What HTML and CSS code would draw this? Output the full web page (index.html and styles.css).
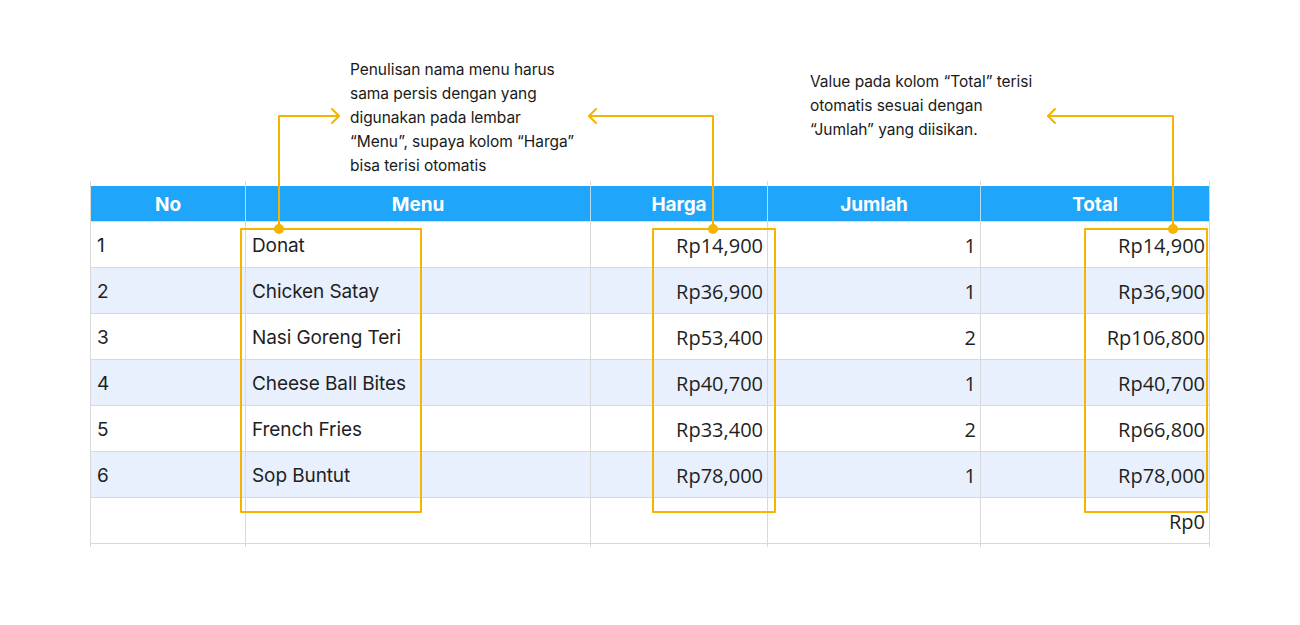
FILE: index.html
```html
<!DOCTYPE html>
<html lang="id">
<head>
<meta charset="utf-8">
<title>Pesanan</title>
<link rel="stylesheet" href="styles.css">
</head>
<body>
<div class="page">
  <p class="note note-menu">Penulisan nama menu harus<br>sama persis dengan yang<br>digunakan pada lembar<br>“Menu”, supaya kolom “Harga”<br>bisa terisi otomatis</p>
  <p class="note note-total">Value pada kolom “Total” terisi<br>otomatis sesuai dengan<br>“Jumlah” yang diisikan.</p>

  <div class="sheet">
    <div class="cell gap"></div><div class="cell gap"></div><div class="cell gap"></div><div class="cell gap"></div><div class="cell gap"></div>

    <div class="cell head">No</div><div class="cell head">Menu</div><div class="cell head">Harga</div><div class="cell head">Jumlah</div><div class="cell head">Total</div>

    <div class="cell txt">1</div><div class="cell txt">Donat</div><div class="cell num">Rp14,900</div><div class="cell num">1</div><div class="cell num">Rp14,900</div>
    <div class="cell txt alt">2</div><div class="cell txt alt">Chicken Satay</div><div class="cell num alt">Rp36,900</div><div class="cell num alt">1</div><div class="cell num alt">Rp36,900</div>
    <div class="cell txt">3</div><div class="cell txt">Nasi Goreng Teri</div><div class="cell num">Rp53,400</div><div class="cell num">2</div><div class="cell num">Rp106,800</div>
    <div class="cell txt alt">4</div><div class="cell txt alt">Cheese Ball Bites</div><div class="cell num alt">Rp40,700</div><div class="cell num alt">1</div><div class="cell num alt">Rp40,700</div>
    <div class="cell txt">5</div><div class="cell txt">French Fries</div><div class="cell num">Rp33,400</div><div class="cell num">2</div><div class="cell num">Rp66,800</div>
    <div class="cell txt alt">6</div><div class="cell txt alt">Sop Buntut</div><div class="cell num alt">Rp78,000</div><div class="cell num alt">1</div><div class="cell num alt">Rp78,000</div>
    <div class="cell txt"></div><div class="cell txt"></div><div class="cell num"></div><div class="cell num"></div><div class="cell num">Rp0</div>

    <div class="cell gap"></div><div class="cell gap"></div><div class="cell gap"></div><div class="cell gap"></div><div class="cell gap"></div>
  </div>

  <svg class="callouts" width="1300" height="625" viewBox="0 0 1300 625" aria-hidden="true">
    <g fill="none" stroke="#f5b400" stroke-width="2" stroke-linecap="round" stroke-linejoin="round">
      <rect x="241" y="229" width="180" height="283"/>
      <rect x="653" y="229" width="122" height="283"/>
      <rect x="1085" y="229" width="122" height="283"/>
      <path d="M279 229 V116 H339"/>
      <path d="M332 109 L339 116 L332 123"/>
      <path d="M713 229 V116 H589"/>
      <path d="M596 109 L589 116 L596 123"/>
      <path d="M1173 229 V116 H1048"/>
      <path d="M1055 109 L1048 116 L1055 123"/>
    </g>
    <g fill="#f5b400">
      <circle cx="279" cy="229" r="5"/>
      <circle cx="713" cy="229" r="5"/>
      <circle cx="1173" cy="229" r="5"/>
    </g>
  </svg>
</div>
</body>
</html>
```

FILE: styles.css
```css
* { box-sizing: border-box; }

html, body {
  margin: 0;
  padding: 0;
  background: #ffffff;
}

.page {
  position: relative;
  width: 1300px;
  height: 625px;
  padding-top: 181px;
  overflow: hidden;
  font-family: Inter, "Noto Sans", sans-serif;
  color: #1f1f1f;
}

.note {
  position: absolute;
  margin: 0;
  font-size: 15.5px;
  line-height: 24px;
  letter-spacing: -0.05px;
  color: #1a1a1a;
}

.note-menu { left: 350px; top: 58px; }
.note-total { left: 810px; top: 70px; }

.callouts {
  position: absolute;
  left: 0;
  top: 0;
  pointer-events: none;
}

.sheet {
  margin-left: 90px;
  display: grid;
  grid-template-columns: 155px 345px 177px 213px 229px;
  grid-template-rows: 5px 36px repeat(7, 46px) 3px;
  width: 1119px;
  border-left: 1px solid #d9d9d9;
}

.cell {
  border-right: 1px solid #d9d9d9;
  border-bottom: 1px solid #d9d9d9;
  display: flex;
  align-items: center;
  padding-top: 1px;
  font-size: 19px;
  letter-spacing: -0.1px;
  white-space: nowrap;
}

.gap {
  border-bottom: none;
  padding-top: 0;
}

.head {
  background: #1fa5f9;
  color: #ffffff;
  font-weight: 700;
  justify-content: center;
  border-right-color: #b9dcf2;
  border-bottom-color: #c9e2f3;
}

.txt {
  padding-left: 6px;
}

.num {
  justify-content: flex-end;
  padding-right: 4px;
  font-family: "Open Sans", sans-serif;
  font-size: 20px;
  letter-spacing: 0;
}

.alt {
  background: #e8f0fd;
}
```
